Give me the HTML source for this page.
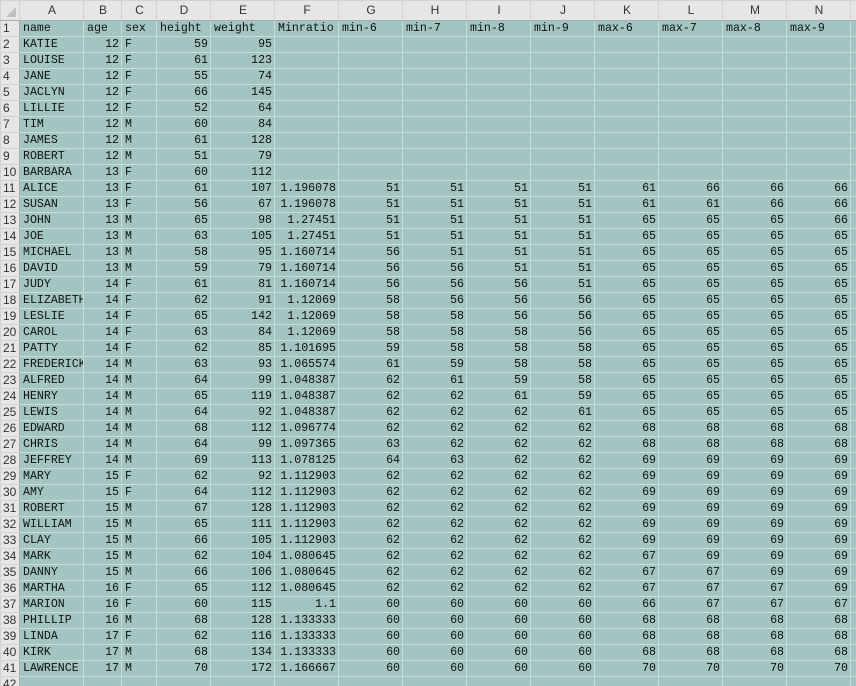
<!DOCTYPE html>
<html><head><meta charset="utf-8"><style>
html,body{margin:0;padding:0;background:#fff;width:856px;height:686px;overflow:hidden}
table{border-collapse:collapse;table-layout:fixed;width:856px;font-family:"Liberation Mono",monospace;font-size:11.6px;color:#111}
td{height:15px;line-height:15px;padding:0 2px 0 3px;border:1px solid #cadcd9;background:#a2c5c1;text-align:right;white-space:nowrap;overflow:hidden}
td.l{text-align:left}
tr.h td{height:19px;background:#e6e6e6;border-color:#d2d2d2;text-align:center;color:#333;font-family:"Liberation Sans",sans-serif;font-size:12px;border-bottom:1px solid #ababab}
td.r{background:#e6e6e6;border-color:#d2d2d2;text-align:left;padding:0 0 0 2px;color:#333;font-family:"Liberation Sans",sans-serif;font-size:12px;border-right:1px solid #ababab}
tr.h td.c{position:relative}
</style></head><body>
<table>
<colgroup><col style="width:19px"><col style="width:64px"><col style="width:38px"><col style="width:35px"><col style="width:54px"><col style="width:64px"><col style="width:64px"><col style="width:64px"><col style="width:64px"><col style="width:64px"><col style="width:64px"><col style="width:64px"><col style="width:64px"><col style="width:64px"><col style="width:64px"><col style="width:6px"></colgroup>
<tr class="h"><td class="c"><svg width="12" height="12" style="position:absolute;right:2px;bottom:2px"><polygon points="11,1 11,11 1,11" fill="#c0c0c0"/></svg></td><td>A</td><td>B</td><td>C</td><td>D</td><td>E</td><td>F</td><td>G</td><td>H</td><td>I</td><td>J</td><td>K</td><td>L</td><td>M</td><td>N</td><td></td></tr>
<tr><td class="r">1</td><td class="l">name</td><td class="l">age</td><td class="l">sex</td><td class="l">height</td><td class="l">weight</td><td class="l">Minratio</td><td class="l">min-6</td><td class="l">min-7</td><td class="l">min-8</td><td class="l">min-9</td><td class="l">max-6</td><td class="l">max-7</td><td class="l">max-8</td><td class="l">max-9</td><td></td></tr>
<tr><td class="r">2</td><td class="l">KATIE</td><td>12</td><td class="l">F</td><td>59</td><td>95</td><td></td><td></td><td></td><td></td><td></td><td></td><td></td><td></td><td></td><td></td></tr>
<tr><td class="r">3</td><td class="l">LOUISE</td><td>12</td><td class="l">F</td><td>61</td><td>123</td><td></td><td></td><td></td><td></td><td></td><td></td><td></td><td></td><td></td><td></td></tr>
<tr><td class="r">4</td><td class="l">JANE</td><td>12</td><td class="l">F</td><td>55</td><td>74</td><td></td><td></td><td></td><td></td><td></td><td></td><td></td><td></td><td></td><td></td></tr>
<tr><td class="r">5</td><td class="l">JACLYN</td><td>12</td><td class="l">F</td><td>66</td><td>145</td><td></td><td></td><td></td><td></td><td></td><td></td><td></td><td></td><td></td><td></td></tr>
<tr><td class="r">6</td><td class="l">LILLIE</td><td>12</td><td class="l">F</td><td>52</td><td>64</td><td></td><td></td><td></td><td></td><td></td><td></td><td></td><td></td><td></td><td></td></tr>
<tr><td class="r">7</td><td class="l">TIM</td><td>12</td><td class="l">M</td><td>60</td><td>84</td><td></td><td></td><td></td><td></td><td></td><td></td><td></td><td></td><td></td><td></td></tr>
<tr><td class="r">8</td><td class="l">JAMES</td><td>12</td><td class="l">M</td><td>61</td><td>128</td><td></td><td></td><td></td><td></td><td></td><td></td><td></td><td></td><td></td><td></td></tr>
<tr><td class="r">9</td><td class="l">ROBERT</td><td>12</td><td class="l">M</td><td>51</td><td>79</td><td></td><td></td><td></td><td></td><td></td><td></td><td></td><td></td><td></td><td></td></tr>
<tr><td class="r">10</td><td class="l">BARBARA</td><td>13</td><td class="l">F</td><td>60</td><td>112</td><td></td><td></td><td></td><td></td><td></td><td></td><td></td><td></td><td></td><td></td></tr>
<tr><td class="r">11</td><td class="l">ALICE</td><td>13</td><td class="l">F</td><td>61</td><td>107</td><td>1.196078</td><td>51</td><td>51</td><td>51</td><td>51</td><td>61</td><td>66</td><td>66</td><td>66</td><td></td></tr>
<tr><td class="r">12</td><td class="l">SUSAN</td><td>13</td><td class="l">F</td><td>56</td><td>67</td><td>1.196078</td><td>51</td><td>51</td><td>51</td><td>51</td><td>61</td><td>61</td><td>66</td><td>66</td><td></td></tr>
<tr><td class="r">13</td><td class="l">JOHN</td><td>13</td><td class="l">M</td><td>65</td><td>98</td><td>1.27451</td><td>51</td><td>51</td><td>51</td><td>51</td><td>65</td><td>65</td><td>65</td><td>66</td><td></td></tr>
<tr><td class="r">14</td><td class="l">JOE</td><td>13</td><td class="l">M</td><td>63</td><td>105</td><td>1.27451</td><td>51</td><td>51</td><td>51</td><td>51</td><td>65</td><td>65</td><td>65</td><td>65</td><td></td></tr>
<tr><td class="r">15</td><td class="l">MICHAEL</td><td>13</td><td class="l">M</td><td>58</td><td>95</td><td>1.160714</td><td>56</td><td>51</td><td>51</td><td>51</td><td>65</td><td>65</td><td>65</td><td>65</td><td></td></tr>
<tr><td class="r">16</td><td class="l">DAVID</td><td>13</td><td class="l">M</td><td>59</td><td>79</td><td>1.160714</td><td>56</td><td>56</td><td>51</td><td>51</td><td>65</td><td>65</td><td>65</td><td>65</td><td></td></tr>
<tr><td class="r">17</td><td class="l">JUDY</td><td>14</td><td class="l">F</td><td>61</td><td>81</td><td>1.160714</td><td>56</td><td>56</td><td>56</td><td>51</td><td>65</td><td>65</td><td>65</td><td>65</td><td></td></tr>
<tr><td class="r">18</td><td class="l">ELIZABETH</td><td>14</td><td class="l">F</td><td>62</td><td>91</td><td>1.12069</td><td>58</td><td>56</td><td>56</td><td>56</td><td>65</td><td>65</td><td>65</td><td>65</td><td></td></tr>
<tr><td class="r">19</td><td class="l">LESLIE</td><td>14</td><td class="l">F</td><td>65</td><td>142</td><td>1.12069</td><td>58</td><td>58</td><td>56</td><td>56</td><td>65</td><td>65</td><td>65</td><td>65</td><td></td></tr>
<tr><td class="r">20</td><td class="l">CAROL</td><td>14</td><td class="l">F</td><td>63</td><td>84</td><td>1.12069</td><td>58</td><td>58</td><td>58</td><td>56</td><td>65</td><td>65</td><td>65</td><td>65</td><td></td></tr>
<tr><td class="r">21</td><td class="l">PATTY</td><td>14</td><td class="l">F</td><td>62</td><td>85</td><td>1.101695</td><td>59</td><td>58</td><td>58</td><td>58</td><td>65</td><td>65</td><td>65</td><td>65</td><td></td></tr>
<tr><td class="r">22</td><td class="l">FREDERICK</td><td>14</td><td class="l">M</td><td>63</td><td>93</td><td>1.065574</td><td>61</td><td>59</td><td>58</td><td>58</td><td>65</td><td>65</td><td>65</td><td>65</td><td></td></tr>
<tr><td class="r">23</td><td class="l">ALFRED</td><td>14</td><td class="l">M</td><td>64</td><td>99</td><td>1.048387</td><td>62</td><td>61</td><td>59</td><td>58</td><td>65</td><td>65</td><td>65</td><td>65</td><td></td></tr>
<tr><td class="r">24</td><td class="l">HENRY</td><td>14</td><td class="l">M</td><td>65</td><td>119</td><td>1.048387</td><td>62</td><td>62</td><td>61</td><td>59</td><td>65</td><td>65</td><td>65</td><td>65</td><td></td></tr>
<tr><td class="r">25</td><td class="l">LEWIS</td><td>14</td><td class="l">M</td><td>64</td><td>92</td><td>1.048387</td><td>62</td><td>62</td><td>62</td><td>61</td><td>65</td><td>65</td><td>65</td><td>65</td><td></td></tr>
<tr><td class="r">26</td><td class="l">EDWARD</td><td>14</td><td class="l">M</td><td>68</td><td>112</td><td>1.096774</td><td>62</td><td>62</td><td>62</td><td>62</td><td>68</td><td>68</td><td>68</td><td>68</td><td></td></tr>
<tr><td class="r">27</td><td class="l">CHRIS</td><td>14</td><td class="l">M</td><td>64</td><td>99</td><td>1.097365</td><td>63</td><td>62</td><td>62</td><td>62</td><td>68</td><td>68</td><td>68</td><td>68</td><td></td></tr>
<tr><td class="r">28</td><td class="l">JEFFREY</td><td>14</td><td class="l">M</td><td>69</td><td>113</td><td>1.078125</td><td>64</td><td>63</td><td>62</td><td>62</td><td>69</td><td>69</td><td>69</td><td>69</td><td></td></tr>
<tr><td class="r">29</td><td class="l">MARY</td><td>15</td><td class="l">F</td><td>62</td><td>92</td><td>1.112903</td><td>62</td><td>62</td><td>62</td><td>62</td><td>69</td><td>69</td><td>69</td><td>69</td><td></td></tr>
<tr><td class="r">30</td><td class="l">AMY</td><td>15</td><td class="l">F</td><td>64</td><td>112</td><td>1.112903</td><td>62</td><td>62</td><td>62</td><td>62</td><td>69</td><td>69</td><td>69</td><td>69</td><td></td></tr>
<tr><td class="r">31</td><td class="l">ROBERT</td><td>15</td><td class="l">M</td><td>67</td><td>128</td><td>1.112903</td><td>62</td><td>62</td><td>62</td><td>62</td><td>69</td><td>69</td><td>69</td><td>69</td><td></td></tr>
<tr><td class="r">32</td><td class="l">WILLIAM</td><td>15</td><td class="l">M</td><td>65</td><td>111</td><td>1.112903</td><td>62</td><td>62</td><td>62</td><td>62</td><td>69</td><td>69</td><td>69</td><td>69</td><td></td></tr>
<tr><td class="r">33</td><td class="l">CLAY</td><td>15</td><td class="l">M</td><td>66</td><td>105</td><td>1.112903</td><td>62</td><td>62</td><td>62</td><td>62</td><td>69</td><td>69</td><td>69</td><td>69</td><td></td></tr>
<tr><td class="r">34</td><td class="l">MARK</td><td>15</td><td class="l">M</td><td>62</td><td>104</td><td>1.080645</td><td>62</td><td>62</td><td>62</td><td>62</td><td>67</td><td>69</td><td>69</td><td>69</td><td></td></tr>
<tr><td class="r">35</td><td class="l">DANNY</td><td>15</td><td class="l">M</td><td>66</td><td>106</td><td>1.080645</td><td>62</td><td>62</td><td>62</td><td>62</td><td>67</td><td>67</td><td>69</td><td>69</td><td></td></tr>
<tr><td class="r">36</td><td class="l">MARTHA</td><td>16</td><td class="l">F</td><td>65</td><td>112</td><td>1.080645</td><td>62</td><td>62</td><td>62</td><td>62</td><td>67</td><td>67</td><td>67</td><td>69</td><td></td></tr>
<tr><td class="r">37</td><td class="l">MARION</td><td>16</td><td class="l">F</td><td>60</td><td>115</td><td>1.1</td><td>60</td><td>60</td><td>60</td><td>60</td><td>66</td><td>67</td><td>67</td><td>67</td><td></td></tr>
<tr><td class="r">38</td><td class="l">PHILLIP</td><td>16</td><td class="l">M</td><td>68</td><td>128</td><td>1.133333</td><td>60</td><td>60</td><td>60</td><td>60</td><td>68</td><td>68</td><td>68</td><td>68</td><td></td></tr>
<tr><td class="r">39</td><td class="l">LINDA</td><td>17</td><td class="l">F</td><td>62</td><td>116</td><td>1.133333</td><td>60</td><td>60</td><td>60</td><td>60</td><td>68</td><td>68</td><td>68</td><td>68</td><td></td></tr>
<tr><td class="r">40</td><td class="l">KIRK</td><td>17</td><td class="l">M</td><td>68</td><td>134</td><td>1.133333</td><td>60</td><td>60</td><td>60</td><td>60</td><td>68</td><td>68</td><td>68</td><td>68</td><td></td></tr>
<tr><td class="r">41</td><td class="l">LAWRENCE</td><td>17</td><td class="l">M</td><td>70</td><td>172</td><td>1.166667</td><td>60</td><td>60</td><td>60</td><td>60</td><td>70</td><td>70</td><td>70</td><td>70</td><td></td></tr>
<tr><td class="r">42</td><td></td><td></td><td></td><td></td><td></td><td></td><td></td><td></td><td></td><td></td><td></td><td></td><td></td><td></td><td></td></tr>
</table>
</body></html>
